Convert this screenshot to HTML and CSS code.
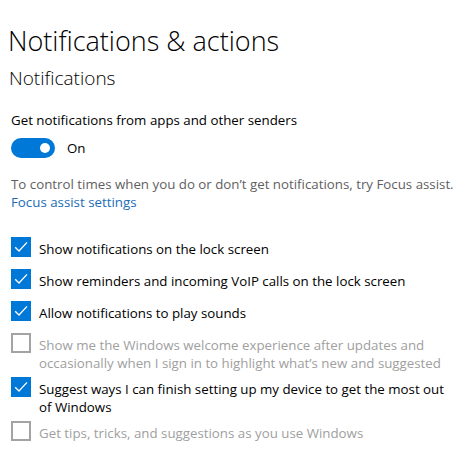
FILE: index.html
```html
<!DOCTYPE html>
<html lang="en">
<head>
<meta charset="utf-8">
<title>Notifications &amp; actions</title>
<link rel="stylesheet" href="styles.css">
</head>
<body>
<main class="page">
  <h1 class="title">Notifications &amp; actions</h1>
  <h2 class="subtitle">Notifications</h2>
  <section class="section">
    <p class="label">Get notifications from apps and other senders</p>
    <div class="toggle-row">
      <span class="toggle"><span class="knob"></span></span>
      <span class="toggle-text">On</span>
    </div>
    <p class="desc">To control times when you do or don’t get notifications, try Focus assist.</p>
    <a class="link" href="#">Focus assist settings</a>
    <ul class="list">
      <li class="row">
        <span class="box checked"><svg viewBox="0 0 20 20" width="20" height="20"><path d="M4.2 10.2 L8 14 L16 5.4" fill="none" stroke="#fff" stroke-width="1.3"/></svg></span>
        <span class="text">Show notifications on the lock screen</span>
      </li>
      <li class="row">
        <span class="box checked"><svg viewBox="0 0 20 20" width="20" height="20"><path d="M4.2 10.2 L8 14 L16 5.4" fill="none" stroke="#fff" stroke-width="1.3"/></svg></span>
        <span class="text">Show reminders and incoming VoIP calls on the lock screen</span>
      </li>
      <li class="row">
        <span class="box checked"><svg viewBox="0 0 20 20" width="20" height="20"><path d="M4.2 10.2 L8 14 L16 5.4" fill="none" stroke="#fff" stroke-width="1.3"/></svg></span>
        <span class="text">Allow notifications to play sounds</span>
      </li>
      <li class="row disabled">
        <span class="box"></span>
        <span class="text">Show me the Windows welcome experience after updates and occasionally when I sign in to highlight what’s new and suggested</span>
      </li>
      <li class="row">
        <span class="box checked"><svg viewBox="0 0 20 20" width="20" height="20"><path d="M4.2 10.2 L8 14 L16 5.4" fill="none" stroke="#fff" stroke-width="1.3"/></svg></span>
        <span class="text">Suggest ways I can finish setting up my device to get the most out of Windows</span>
      </li>
      <li class="row disabled">
        <span class="box"></span>
        <span class="text">Get tips, tricks, and suggestions as you use Windows</span>
      </li>
    </ul>
  </section>
</main>
</body>
</html>
```
FILE: styles.css
```css
html, body {
  margin: 0;
  padding: 0;
  background: #ffffff;
}
.page {
  padding: 25px 5px 0 8px;
  font-family: "Open Sans", "Noto Sans", sans-serif;
  color: #000;
}
.title {
  margin: 0;
  font-size: 27px;
  font-weight: 300;
  line-height: 32px;
}
.subtitle {
  margin: 9px 0 0 1px;
  font-size: 19px;
  font-weight: 350;
  line-height: 24px;
}
.section {
  padding-left: 3px;
  font-size: 13.3px;
}
.label {
  margin: 20px 0 0 0;
  line-height: 20px;
}
.toggle-row {
  margin-top: 8px;
  display: flex;
  align-items: center;
  gap: 12px;
  height: 20px;
}
.toggle {
  width: 44px;
  height: 20px;
  border-radius: 10px;
  background: #0078d7;
  display: flex;
  align-items: center;
  justify-content: flex-end;
  padding-right: 5px;
  box-sizing: border-box;
}
.knob {
  width: 10px;
  height: 10px;
  border-radius: 50%;
  background: #fff;
}
.toggle-text {
  line-height: 20px;
}
.desc {
  margin: 18px 0 0 0;
  line-height: 17px;
  color: #5f5f5f;
}
.link {
  display: block;
  margin-top: 1px;
  line-height: 17px;
  color: #1a6db5;
  text-decoration: none;
}
.list {
  list-style: none;
  margin: 26px 0 0 0;
  padding: 0;
}
.row {
  display: flex;
  align-items: flex-start;
  gap: 8px;
  min-height: 32px;
  padding-bottom: 5px;
  box-sizing: border-box;
}
.box {
  flex: none;
  width: 20px;
  height: 20px;
  box-sizing: border-box;
  border: 2px solid #a3a3a3;
  display: flex;
}
.box.checked {
  border: none;
  background: #0078d7;
}
.text {
  padding-top: 3px;
  line-height: 18px;
}
.disabled .text {
  color: #a0a0a0;
}
```
